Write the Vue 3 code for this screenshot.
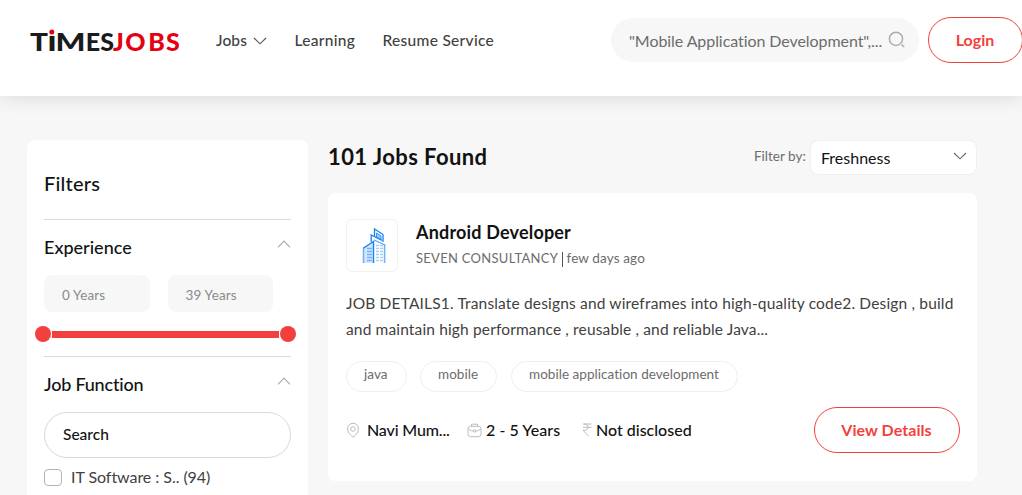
<script setup>
const tags = [
  { label: 'java', size: 'tag-s' },
  { label: 'mobile', size: 'tag-m' },
  { label: 'mobile application development', size: 'tag-l' },
]
</script>

<template>
  <div class="page">
    <header class="header">
      <svg class="logo" width="152" height="46" viewBox="0 0 152 46">
        <g class="logo-text">
          <text x="0" y="32" textLength="18" lengthAdjust="spacingAndGlyphs">T</text>
          <text class="letter-i" x="17.5" y="32" textLength="9" lengthAdjust="spacingAndGlyphs">i</text>
          <text x="25.5" y="32" textLength="30" lengthAdjust="spacingAndGlyphs">M</text>
          <text x="55.8 70.3" y="32">ES</text>
          <text class="red" x="83 95.2 118.3 136" y="32">JOBS</text>
        </g>
        <rect x="18.5" y="6" width="7.5" height="10.4" fill="#fff" />
        <circle cx="21.8" cy="13" r="2.5" fill="#e60012" />
      </svg>
      <nav class="nav">
        <a class="n-jobs">Jobs
          <svg width="14" height="8" viewBox="0 0 14 8"><path d="M1 1L7 6.8L13 1" /></svg>
        </a>
        <a class="n-learn">Learning</a>
        <a class="n-resume">Resume Service</a>
      </nav>
      <div class="search">
        <span>"Mobile Application Development",...</span>
        <svg width="18" height="18" viewBox="0 0 18 18"><circle cx="8" cy="7.8" r="6.6" /><path d="M13.6 13.6l2.6 2.4" /></svg>
      </div>
      <button class="btn login">Login</button>
    </header>

    <main class="main">
      <aside class="filters">
        <h2>Filters</h2>
        <section class="experience">
          <h3><span class="t-exp">Experience</span><svg width="14" height="8" viewBox="0 0 14 8"><path d="M1 7.3L7 1L13 7.3" /></svg></h3>
          <div class="years"><span>0 Years</span><span>39 Years</span></div>
          <div class="slider"><i></i><b></b><i></i></div>
        </section>
        <section class="function">
          <h3><span class="t-job">Job Function</span><svg width="14" height="8" viewBox="0 0 14 8"><path d="M1 7.3L7 1L13 7.3" /></svg></h3>
          <div class="fsearch">Search</div>
          <label class="option"><i></i><span>IT Software : S.. (94)</span></label>
        </section>
      </aside>

      <div class="results">
        <div class="bar">
          <h1>101 Jobs Found</h1>
          <span class="by">Filter by:</span>
          <div class="select"><span>Freshness</span><svg width="14" height="8" viewBox="0 0 14 8"><path d="M1 1L7 6.8L13 1" /></svg></div>
        </div>
        <article class="card">
          <div class="top">
            <div class="company-logo">
              <svg width="24" height="36" viewBox="0 0 24 36" fill="none">
                <path d="M1 35V19L12 13V35Z" fill="#d4e7fc" />
                <path d="M1.5 35V21M22.6 35V16.5" stroke="#72b2fa" stroke-width="1.6" />
                <path d="M1 20.5L11.5 13.5V35" stroke="#1683f3" stroke-width="1.4" />
                <path d="M12 12L23 17" stroke="#56a3f7" stroke-width="1.3" />
                <path d="M9.2 14V7L20 12.3M12.5 8V1L21 6.5V14" stroke="#1683f3" stroke-width="1.3" />
                <path d="M14.5 5L19 8V11.5L14.5 9Z" fill="#9bc9fb" stroke="#1683f3" stroke-width=".8" />
                <path d="M5 20.5h5M5 23.5h5M5 26.5h5M5 29.5h5M5 32.5h5" stroke="#72b2fa" stroke-width="1.3" />
                <path d="M14 17.5h7M14 20.5h7M14 23.5h7M14 26.5h7M14 29.5h7M14 32.5h7" stroke="#a4cffc" stroke-width="1.3" stroke-dasharray="3 1" />
              </svg>
            </div>
            <div>
              <h4>Android Developer</h4>
              <p class="meta"><span class="company">SEVEN CONSULTANCY</span><span class="ago">few days ago</span></p>
            </div>
          </div>
          <p class="desc"><span class="d1">JOB DETAILS1. Translate designs and wireframes into high-quality code2. Design , build</span><br /><span class="d2">and maintain high performance , reusable , and reliable Java...</span></p>
          <div class="tags"><span v-for="t in tags" :key="t.label" :class="t.size">{{ t.label }}</span></div>
          <div class="bottom">
            <div class="info place">
              <svg width="14" height="16" viewBox="0 0 14 16"><path d="M7 15C5.5 14.2 1.5 11 1.5 6.8A5.5 5.5 0 0 1 12.5 6.8C12.5 11 8.5 14.2 7 15Z" /><circle cx="7" cy="7" r="2.3" /></svg>
              <span class="t-place">Navi Mum...</span>
            </div>
            <div class="info exp">
              <svg width="15" height="15" viewBox="0 0 15 15"><rect x="1" y="3.3" width="13" height="10.4" rx="2.5" /><path d="M4.5 3.3V1.2H10.5V3.3M1.2 6C4 8 5.5 8 6.2 8M13.8 6C11 8 9.5 8 8.8 8" /><circle cx="7.5" cy="8" r="1.2" /></svg>
              <span class="t-range">2 - 5 Years</span>
            </div>
            <div class="info pay">
              <svg width="10" height="14" viewBox="0 0 10 14"><path d="M1 1H9.5M1 4.3H9.5M2 1C7.5 1 7.5 7.3 2 7.3H1L6.5 13" /></svg>
              <span>Not disclosed</span>
            </div>
            <button class="btn view">View Details</button>
          </div>
        </article>
      </div>
    </main>
  </div>
</template>

<style>
body { margin: 0; background: #f7f7f7; overflow: hidden; }
</style>

<style scoped>
* { box-sizing: border-box; }
.page { width: 1022px; height: 495px; overflow: hidden; background: #f7f7f7; font-family: Lato, "Open Sans", sans-serif; font-size: 16px; font-variant-ligatures: none; color: #121212; white-space: nowrap; }
h1, h2, h3, h4, p { margin: 0; }
svg { flex: none; fill: none; stroke-width: 1.1; }
.header { height: 96px; background: #fff; display: flex; align-items: flex-start; position: relative; box-shadow: 0 0 20px rgba(0, 0, 0, .14); }
.logo { margin: 19px 0 0 30px; overflow: visible; }
.logo-text { font: 900 25px Lato, sans-serif; fill: #1b1b1b; }
.logo-text .red { fill: #e60012; }
.logo-text .letter-i { font-size: 28px; }
.nav { display: flex; margin: 29px 0 0 34px; height: 22px; line-height: 22px; font-size: 15.5px; font-weight: 500; color: #414141; }
.nav a { display: flex; align-items: center; }
.n-jobs { width: 78.5px; gap: 6px; letter-spacing: .1px; }
.nav svg { stroke: #555; margin-top: 1px; }
.n-learn { width: 88px; letter-spacing: .3px; }
.n-resume { letter-spacing: .3px; }
.search { position: absolute; left: 611px; top: 18px; width: 308px; height: 44px; border-radius: 22px; background: #f7f7f7; padding: 0 13px 0 18px; display: flex; align-items: center; justify-content: space-between; color: #6c6c6c; letter-spacing: -.07px; }
.search svg { stroke: #aeaeae; stroke-width: 1.5; }
.btn { height: 46px; border: 1px solid #f43f3f; border-radius: 23px; background: #fff; color: #f43f3f; font: 700 16px Lato, sans-serif; padding: 0 1px 2px 0; }
.login { position: absolute; left: 928px; top: 17px; width: 95px; }
.main { display: flex; padding: 44px 0 0 27px; gap: 20px; }
.filters { width: 281px; height: 420px; flex: none; background: #fff; border-radius: 8px; padding: 0 17px; }
h2 { height: 80px; padding-top: 31px; line-height: 24px; font-size: 20px; font-weight: 500; letter-spacing: .2px; border-bottom: 1px solid #d9d9d9; }
h3 { display: flex; justify-content: space-between; padding-top: 15px; height: 55px; line-height: 24px; font-size: 18px; font-weight: 500; }
h3 svg { stroke: #aaa; margin-top: 5px; }
.t-job { letter-spacing: -.2px; }
.experience { height: 137px; border-bottom: 1px solid #d9d9d9; }
.years { display: flex; gap: 18px; }
.years span { width: 105.5px; height: 37px; border-radius: 8px; background: #f7f7f7; padding: 4px 0 0 18px; line-height: 33px; font-size: 13.5px; color: #8a8a8a; letter-spacing: .15px; }
.slider { display: flex; align-items: center; margin: 14px -5px 0 -9px; height: 16px; }
.slider i { width: 16px; height: 16px; border-radius: 50%; background: #f43f3f; }
.slider b { flex: 1; height: 7px; background: #f43f3f; margin: 0 1px; }
.fsearch { height: 46px; border: 1px solid #d9d9d9; border-radius: 23px; padding-left: 18px; line-height: 42px; font-size: 15.5px; font-weight: 500; }
.option { display: flex; align-items: center; height: 22px; margin-top: 8px; color: #414141; letter-spacing: -.05px; }
.option span { position: relative; top: -1px; }
.option i { width: 18px; height: 17px; border: 1px solid #b3b3b3; border-radius: 4px; margin: 0 9px 0 0; }
.results { width: 649px; }
.bar { display: flex; height: 53px; align-items: flex-start; }
h1 { width: 426px; line-height: 34px; font-size: 22px; font-weight: 700; letter-spacing: .42px; }
.by { width: 56px; line-height: 33px; font-size: 13.5px; color: #6c6c6c; }
.select { width: 167px; height: 35px; border: 1px solid #f0f0f0; border-radius: 8px; background: #fff; padding: 0 10px; line-height: 34px; display: flex; justify-content: space-between; }
.select svg { stroke: #666; margin: 11px -1px 0 0; }
.card { width: 649px; height: 288px; background: #fff; border-radius: 8px; padding: 26px 17px 0 18px; }
.top { display: flex; gap: 18px; height: 71px; }
.company-logo { width: 52px; height: 53px; border: 1px solid #f0f0f0; border-radius: 6px; display: flex; justify-content: center; padding: 8px 0 0 3px; }
h4 { line-height: 26px; font-size: 18px; font-weight: 700; letter-spacing: .18px; }
.meta { display: flex; line-height: 26px; font-size: 13.5px; color: #6c6c6c; }
.company { width: 150.5px; font-size: 13px; letter-spacing: .28px; }
.ago { position: relative; letter-spacing: .13px; }
.ago::before { content: ''; position: absolute; left: -5px; top: 7px; width: 1px; height: 15px; background: #555; }
.desc { line-height: 26px; font-size: 15.5px; color: #414141; height: 71px; }
.d1 { letter-spacing: .165px; }
.d2 { letter-spacing: .145px; }
.tags { display: flex; }
.tags span { height: 31px; border: 1px solid #efefef; border-radius: 16px; padding-left: 17px; line-height: 24px; font-size: 13.5px; color: #6c6c6c; letter-spacing: .04px; }
.tag-s { width: 61px; margin-right: 13px; }
.tag-m { width: 77px; margin-right: 14px; }
.tag-l { width: 227px; }
.bottom { display: flex; align-items: center; height: 46px; margin-top: 15px; }
.info { display: flex; align-items: center; font-weight: 500; }
.info span { position: relative; top: -1px; }
.info svg { stroke: #bcbcbc; stroke-width: 1; }
.t-place { letter-spacing: -.15px; }
.t-range { letter-spacing: .06px; }
.place { width: 121px; gap: 7px; }
.exp { width: 115px; gap: 4px; }
.pay { width: 232px; gap: 4px; }
.view { width: 146px; letter-spacing: .06px; }
</style>
